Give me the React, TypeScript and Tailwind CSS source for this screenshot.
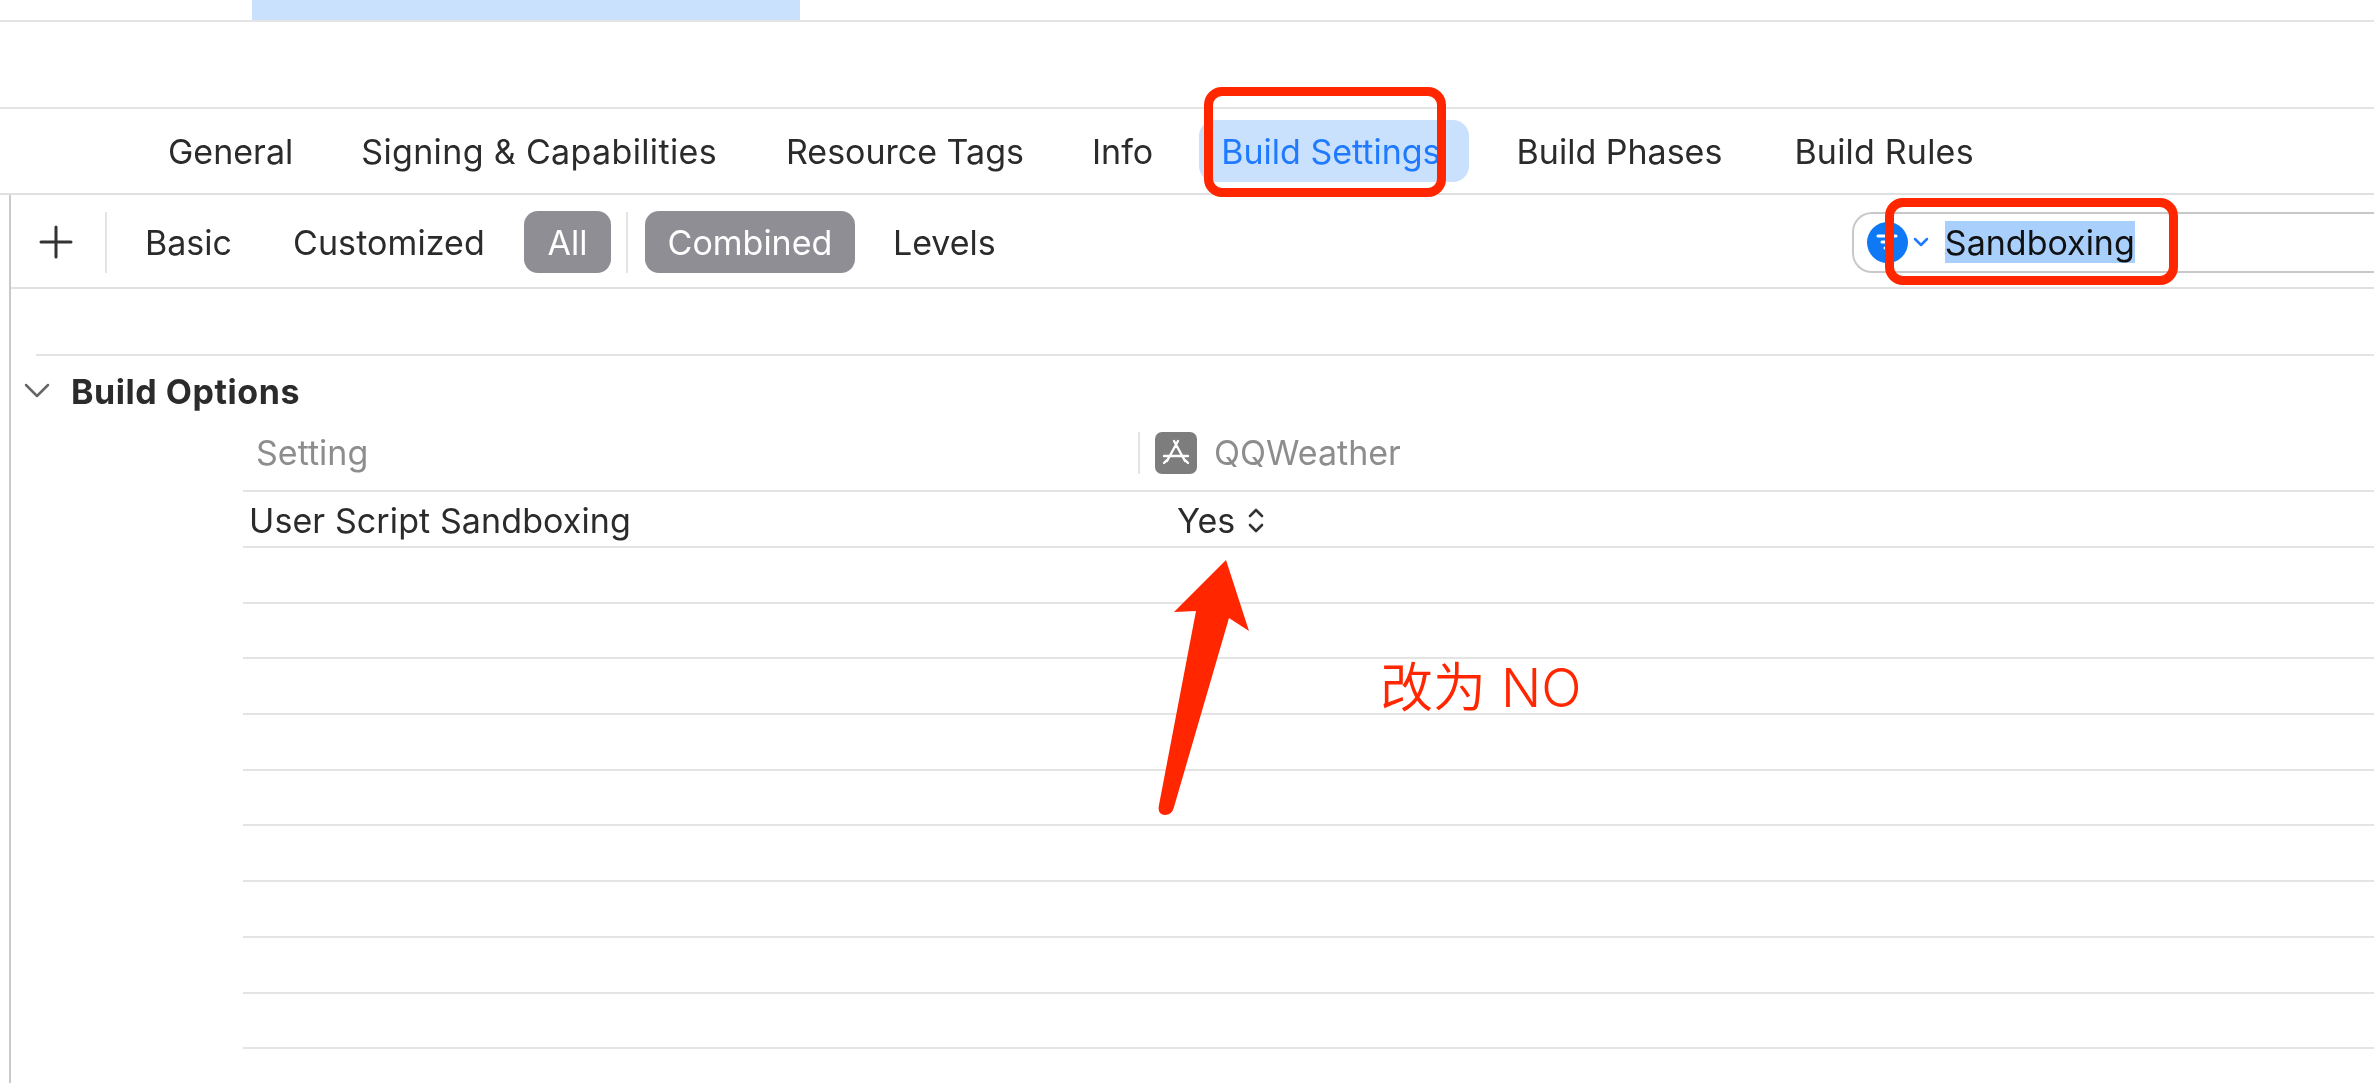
import React from 'react';

const emptyRows = Array.from({ length: 9 }, (_, i) => i);

const App: React.FC = () => {
    return (
        <div className="relative w-[2374px] h-[1083px] overflow-hidden bg-white text-[#2b2b2b] font-['Inter','Noto_Sans_CJK_SC',sans-serif] text-[34px] blur-[0.7px]">
            {/* Top strip */}
            <div className="h-[22px] border-b-2 border-[#e4e4e4]">
                <div className="ml-[252px] w-[548px] h-[20px] bg-[#cae1fd]" />
            </div>
            <div className="h-[87px] border-b-2 border-[#e4e4e4]" />

            {/* Tabs */}
            <div className="h-[86px] border-b-2 border-[#e0e0e0] pl-[168px] flex items-center">
                <span>General</span>
                <span className="ml-[68px] tracking-[0.35px]">Signing &amp; Capabilities</span>
                <span className="ml-[69px]">Resource Tags</span>
                <span className="ml-[68px]">Info</span>
                <span className="ml-[46px] pl-[22px] pr-[28px] h-[62px] flex items-center rounded-[16px] bg-[#cae1fd] text-[#1f7aff]">Build Settings</span>
                <span className="ml-[48px]">Build Phases</span>
                <span className="ml-[72px] tracking-[0.2px]">Build Rules</span>
            </div>

            {/* Main pane */}
            <div className="ml-[9px] border-l-2 border-[#c9c9c9] h-[888px]">
                {/* Filter bar */}
                <div className="h-[94px] pt-[2px] border-b-2 border-[#e0e0e0] flex items-center">
                    <div className="ml-[27px] w-[36px] flex justify-center">
                        <svg width="34" height="34" viewBox="0 0 34 34" stroke="#333" strokeWidth="3" strokeLinecap="round">
                            <path d="M2 17h30M17 2v30" />
                        </svg>
                    </div>
                    <div className="ml-[31px] w-[2px] h-[61px] bg-[#e4e4e4]" />
                    <span className="ml-[38px]">Basic</span>
                    <span className="ml-[61px] tracking-[0.1px]">Customized</span>
                    <span className="ml-[39px] w-[87px] h-[62px] rounded-[14px] bg-[#8f8e94] text-white flex items-center justify-center">All</span>
                    <div className="ml-[15px] w-[2px] h-[61px] bg-[#e4e4e4]" />
                    <span className="ml-[17px] w-[210px] h-[62px] rounded-[14px] bg-[#8f8e94] text-white flex items-center justify-center">Combined</span>
                    <span className="ml-[38px]">Levels</span>
                    {/* Search field */}
                    <div className="ml-[856px] flex-1 h-[61px] rounded-l-[20px] border-2 border-r-0 border-[#c8c8c8] flex items-center pl-[13px]">
                        <div className="w-[41px] h-[41px] rounded-full bg-[#0f78f5] flex items-center justify-center">
                            <svg width="24" height="20" viewBox="0 0 24 20" stroke="#fff" strokeWidth="3" strokeLinecap="round">
                                <path d="M3 4h18M7 10h10M10 16h4" />
                            </svg>
                        </div>
                        <svg className="ml-[5px]" width="16" height="10" viewBox="0 0 16 10" fill="none" stroke="#1f7aff" strokeWidth="2.5" strokeLinecap="round" strokeLinejoin="round">
                            <path d="M2 2l6 6 6-6" />
                        </svg>
                        <span className="ml-[16px] h-[42px] flex items-center bg-[#a9cffd] text-[#111]">Sandboxing</span>
                    </div>
                </div>

                <div className="h-[67px] ml-[25px] border-b-2 border-[#e4e4e4]" />

                {/* Build Options section */}
                <div className="h-[72px] pb-[2px] flex items-center">
                    <svg className="ml-[13px]" width="26" height="16" viewBox="0 0 26 16" fill="none" stroke="#666" strokeWidth="2.5" strokeLinecap="round" strokeLinejoin="round">
                        <path d="M2 2l11 11L24 2" />
                    </svg>
                    <span className="ml-[21px] font-bold tracking-[0.55px]">Build Options</span>
                </div>

                <div className="ml-[232px]">
                    <div className="h-[64px] border-b-2 border-[#e4e4e4] flex items-center text-[#8d8d8d] pb-[13px]">
                        <span className="ml-[13px] w-[882px]">Setting</span>
                        <div className="w-[2px] h-[42px] bg-[#e4e4e4]" />
                        <div className="ml-[15px] w-[42px] h-[42px] rounded-[7px] bg-[#7d7d7d] flex items-center justify-center">
                            <svg width="30" height="30" viewBox="0 0 30 30" fill="none" stroke="#fff" strokeWidth="2.4" strokeLinecap="round">
                                <path d="M13 3l11 20M17 3L6 23M3 18h24M3 25l3-3M24 22l3 3" />
                            </svg>
                        </div>
                        <span className="ml-[17px]">QQWeather</span>
                    </div>
                    <div className="h-[56px] pt-[2px] border-b-2 border-[#e4e4e4] flex items-center">
                        <span className="ml-[6px] w-[928px] tracking-[0.1px]">User Script Sandboxing</span>
                        <span>Yes</span>
                        <svg className="ml-[13px]" width="16" height="25" viewBox="0 0 16 25" fill="none" stroke="#333" strokeWidth="2.6" strokeLinecap="round" strokeLinejoin="round">
                            <path d="M2 8l6-6 6 6M2 17l6 6 6-6" />
                        </svg>
                    </div>
                    {emptyRows.map(i => (
                        <div key={i} className="h-[55.7px] border-b-2 border-[#e4e4e4]" />
                    ))}
                </div>
            </div>

            {/* Red annotations */}
            <div className="absolute left-[1204px] top-[87px] w-[242px] h-[110px] rounded-[18px] border-[9px] border-[#ff2600]" />
            <div className="absolute left-[1885px] top-[198px] w-[293px] h-[87px] rounded-[18px] border-[9px] border-[#ff2600]" />
            <svg className="absolute left-[1151px] top-[555px]" width="105" height="265" viewBox="0 0 105 265" fill="#ff2600">
                <path d="M75 5L23 57L45 56L8 250Q6 260 14 260Q21 260 23 252L78 63L98 76Z" />
            </svg>
            <span className="absolute left-[1380px] top-[651px] text-[53px] font-[350] leading-[75px] text-[#ff2600]">改为 NO</span>
        </div>
    );
};

export default App;
